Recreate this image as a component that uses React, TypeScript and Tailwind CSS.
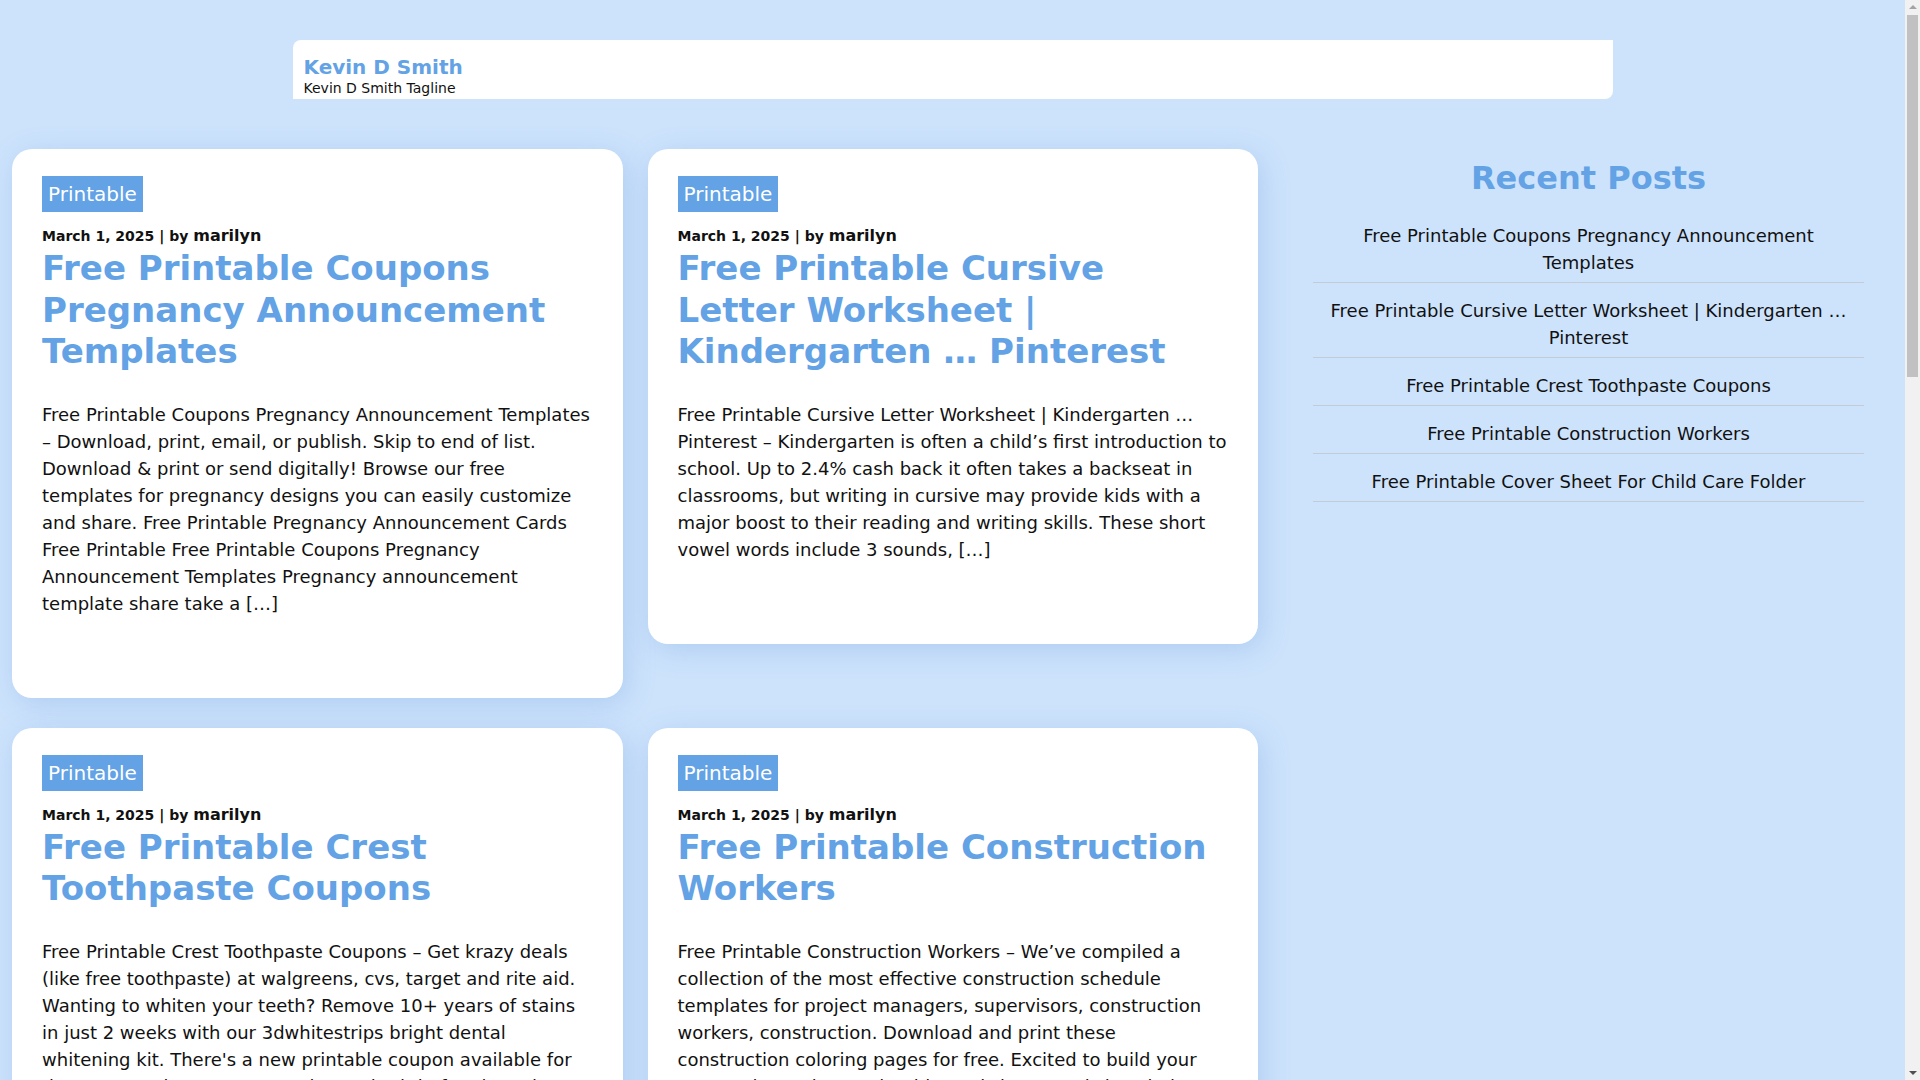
import React from 'react';

type Post = {
    title: string;
    date: string;
    author: string;
    excerpt: string;
};

const posts: Post[] = [
    {
        title: 'Free Printable Coupons Pregnancy Announcement Templates',
        date: 'March 1, 2025',
        author: 'marilyn',
        excerpt:
            'Free Printable Coupons Pregnancy Announcement Templates – Download, print, email, or publish. Skip to end of list. Download & print or send digitally! Browse our free templates for pregnancy designs you can easily customize and share. Free Printable Pregnancy Announcement Cards Free Printable Free Printable Coupons Pregnancy Announcement Templates Pregnancy announcement template share take a […]',
    },
    {
        title: 'Free Printable Cursive Letter Worksheet | Kindergarten … Pinterest',
        date: 'March 1, 2025',
        author: 'marilyn',
        excerpt:
            'Free Printable Cursive Letter Worksheet | Kindergarten … Pinterest – Kindergarten is often a child’s first introduction to school. Up to 2.4% cash back it often takes a backseat in classrooms, but writing in cursive may provide kids with a major boost to their reading and writing skills. These short vowel words include 3 sounds, […]',
    },
    {
        title: 'Free Printable Crest Toothpaste Coupons',
        date: 'March 1, 2025',
        author: 'marilyn',
        excerpt:
            "Free Printable Crest Toothpaste Coupons – Get krazy deals (like free toothpaste) at walgreens, cvs, target and rite aid. Wanting to whiten your teeth? Remove 10+ years of stains in just 2 weeks with our 3dwhitestrips bright dental whitening kit. There's a new printable coupon available for the crest toothpaste you need, so print it before it expires. Save on the brands your family loves every week. […]",
    },
    {
        title: 'Free Printable Construction Workers',
        date: 'March 1, 2025',
        author: 'marilyn',
        excerpt:
            'Free Printable Construction Workers – We’ve compiled a collection of the most effective construction schedule templates for project managers, supervisors, construction workers, construction. Download and print these construction coloring pages for free. Excited to build your next project? These printable worksheets and signs help keep every crew member safe on the job site. […]',
    },
    {
        title: 'Free Printable Cover Sheet For Child Care Folder',
        date: 'March 1, 2025',
        author: 'marilyn',
        excerpt:
            'Free Printable Cover Sheet For Child Care Folder – Keep your daycare paperwork organized with a simple printable cover sheet. Choose from dozens of colorful designs for binders, folders and portfolios. Add the child’s name, classroom and the school year, then print as many copies as you need for parents and staff. Each template is easy to edit and share. […]',
    },
    {
        title: 'Free Printable Birthday Cards For Kids',
        date: 'February 28, 2025',
        author: 'marilyn',
        excerpt:
            'Free Printable Birthday Cards For Kids – Make every birthday special with cute cards you can print at home. Browse fun characters, animals and balloons, add a personal message and print on card stock. These designs are perfect for classmates, cousins and friends, and they only take a few minutes to fold and color before the party starts. […]',
    },
];

const recent = posts.slice( 0, 5 ).map( ( p ) => p.title );

const PostCard = ( { post }: { post: Post } ) => (
    <article className="bg-white rounded-[20px] px-[30px] pt-[27px] pb-[81px] shadow-[4px_6px_28px_rgba(96,146,214,0.28)]">
        <a className="inline-block bg-[#62a2e5] text-white text-[20px] leading-[24px] px-[6px] py-[6px]">
            Printable
        </a>
        <div className="mt-[12px] text-[14px] font-bold leading-[24px] text-[#111]">
            { post.date } | by <span className="text-[16px]">{ post.author }</span>
        </div>
        <h2 className="text-[34px] font-bold leading-[41.6px] text-[#62a2e5]">{ post.title }</h2>
        <p className="mt-[28px] text-[18px] leading-[27px] text-[#111]">{ post.excerpt }</p>
    </article>
);

// the page's own scrollbar, drawn since the viewport one is hidden
const Scrollbar = () => (
    <div className="w-[15px] shrink-0 h-full bg-[#f1f1f1] flex flex-col items-center">
        <div className="mt-[5px] w-0 h-0 border-x-[4px] border-x-transparent border-b-[4px] border-b-[#a3a3a3]" />
        <div className="mt-[6px] w-[11px] h-[362px] bg-[#c1c1c1]" />
        <div className="mt-auto mb-[5px] w-0 h-0 border-x-[4px] border-x-transparent border-t-[4px] border-t-[#505050]" />
    </div>
);

export default function App() {
    return (
        <div className="flex h-screen overflow-hidden bg-[#cde3fc] font-['DejaVu_Sans',sans-serif] text-[#111]">
            <div className="flex-1 h-full overflow-y-auto [scrollbar-width:none]">
                <div className="pb-[60px]">
                    <header className="pt-[40px] flex justify-center">
                        <div className="w-[1320px] h-[59px] bg-white rounded-tl-lg rounded-br-lg pl-[11px] pt-[15px]">
                            <div className="text-[20px] font-bold leading-[24px] text-[#62a2e5]">Kevin D Smith</div>
                            <div className="text-[14px] leading-[19px]">Kevin D Smith Tagline</div>
                        </div>
                    </header>

                    <div className="flex items-start pl-[12px] pt-[50px]">
                        <main className="w-[1246px] shrink-0">
                            <div className="grid grid-cols-2 gap-x-[25px] gap-y-[30px] items-start">
                                { posts.map( ( post ) => (
                                    <PostCard key={ post.title } post={ post } />
                                ) ) }
                            </div>
                            <nav className="mt-[50px] flex justify-center gap-[10px] text-[18px]">
                                <span className="bg-[#62a2e5] text-white px-[14px] py-[6px]">1</span>
                                <a className="bg-white text-[#62a2e5] px-[14px] py-[6px]">2</a>
                                <a className="bg-white text-[#62a2e5] px-[14px] py-[6px]">3</a>
                                <a className="bg-white text-[#62a2e5] px-[14px] py-[6px]">Next »</a>
                            </nav>
                        </main>

                        <aside className="ml-[55px] w-[551px] shrink-0 pt-[11px]">
                            <h2 className="text-center text-[32px] font-bold leading-[37px] text-[#62a2e5]">Recent Posts</h2>
                            <ul className="mt-[11px]">
                                { recent.map( ( title ) => (
                                    <li
                                        key={ title }
                                        className="border-b border-[#c3ccd6] px-[10px] pt-[14px] pb-[6px] text-center text-[18px] leading-[27px]"
                                    >
                                        <a>{ title }</a>
                                    </li>
                                ) ) }
                            </ul>
                        </aside>
                    </div>

                    <footer className="mt-[60px] flex justify-center">
                        <div className="w-[1320px] bg-white rounded-tl-lg rounded-br-lg py-[20px] text-center text-[14px]">
                            © 2025 Kevin D Smith
                        </div>
                    </footer>
                </div>
            </div>
            <Scrollbar />
        </div>
    );
}
